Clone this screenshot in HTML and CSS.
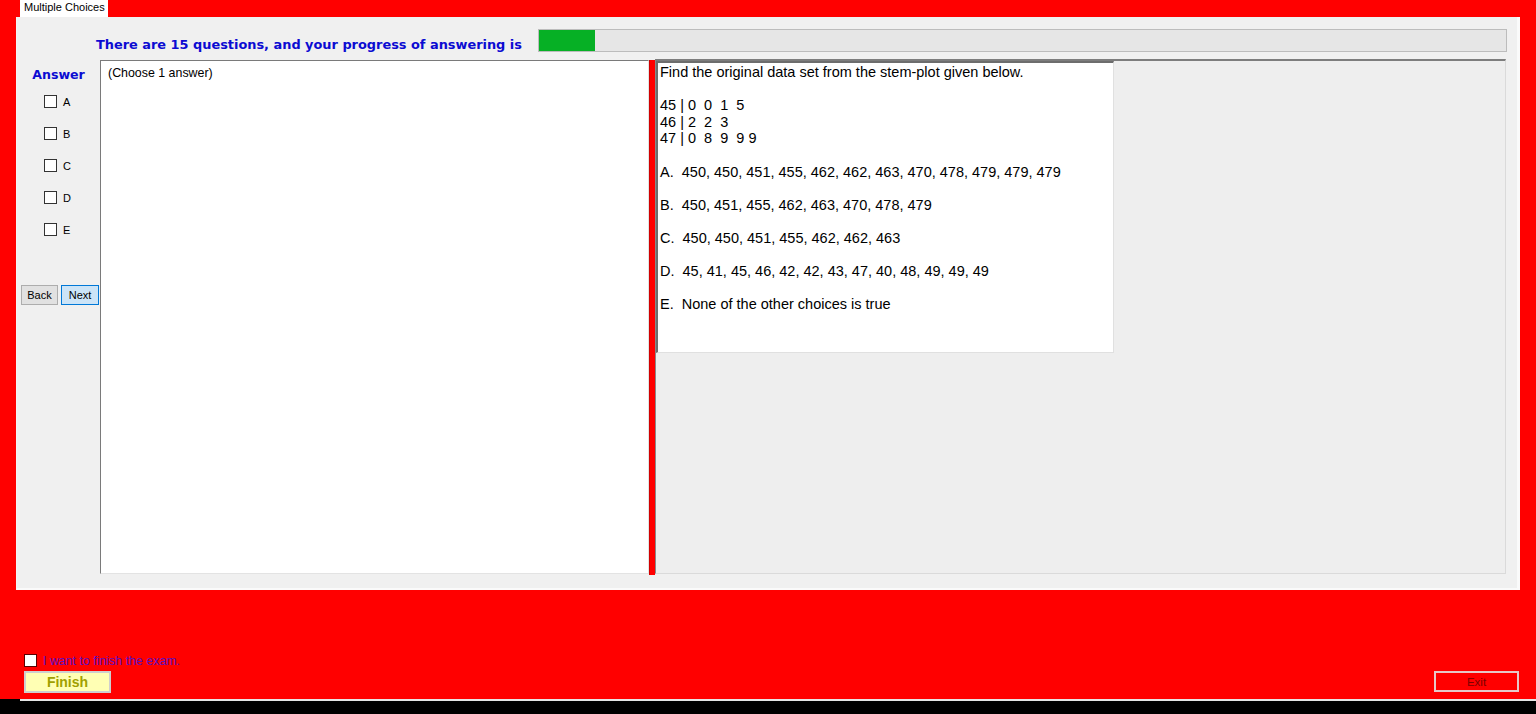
FILE: index.html
```html
<!DOCTYPE html>
<html>
<head>
<meta charset="utf-8">
<title>Multiple Choices</title>
<link rel="stylesheet" href="styles.css">
</head>
<body>
<div class="tabstrip"><div class="tab">Multiple Choices</div></div>
<div class="panel">
  <div class="header">
    <div class="progress-label">There are 15 questions, and your progress of answering is</div>
    <div class="progress"><div class="progress-fill" style="width:56px"></div></div>
  </div>
  <div class="main">
    <div class="side">
      <div class="answer-title">Answer</div>
      <ul class="choices">
        <li><span class="box"></span>A</li>
        <li><span class="box"></span>B</li>
        <li><span class="box"></span>C</li>
        <li><span class="box"></span>D</li>
        <li><span class="box"></span>E</li>
      </ul>
      <div class="nav">
        <button class="btn">Back</button>
        <button class="btn btn-next">Next</button>
      </div>
    </div>
    <div class="answer-box">(Choose 1 answer)</div>
    <div class="splitter"></div>
    <div class="question-area">
      <div class="question">
        <div class="line">Find the original data set from the stem-plot given below.</div>
        <div class="line">&nbsp;</div>
        <div class="line">45 | 0&nbsp; 0&nbsp; 1&nbsp; 5</div>
        <div class="line">46 | 2&nbsp; 2&nbsp; 3</div>
        <div class="line">47 | 0&nbsp; 8&nbsp; 9&nbsp; 9 9</div>
        <div class="line">&nbsp;</div>
        <div class="line">A.&nbsp; 450, 450, 451, 455, 462, 462, 463, 470, 478, 479, 479, 479</div>
        <div class="line">&nbsp;</div>
        <div class="line">B.&nbsp; 450, 451, 455, 462, 463, 470, 478, 479</div>
        <div class="line">&nbsp;</div>
        <div class="line">C.&nbsp; 450, 450, 451, 455, 462, 462, 463</div>
        <div class="line">&nbsp;</div>
        <div class="line">D.&nbsp; 45, 41, 45, 46, 42, 42, 43, 47, 40, 48, 49, 49, 49</div>
        <div class="line">&nbsp;</div>
        <div class="line">E.&nbsp; None of the other choices is true</div>
      </div>
    </div>
  </div>
</div>
<div class="footer">
  <div class="footer-left">
    <label class="finish-check"><span class="cbox"></span>I want to finish the exam.</label>
    <button class="finish">Finish</button>
  </div>
  <button class="exit">Exit</button>
</div>
<div class="taskbar"><div class="taskbar-line"></div></div>
</body>
</html>
```
FILE: styles.css
```css
html, body {
  margin: 0;
  padding: 0;
}
body {
  background: #ff0000;
  width: 1536px;
  height: 714px;
  overflow: hidden;
  font-family: "Liberation Sans", Arial, sans-serif;
  color: #000;
}
.tabstrip {
  height: 17px;
  padding-left: 20px;
  display: flex;
}
.tab {
  width: 88px;
  height: 17px;
  background: #ffffff;
  font-size: 11px;
  line-height: 15px;
  padding-left: 4px;
  box-sizing: border-box;
  white-space: nowrap;
}
.panel {
  margin-left: 16px;
  width: 1504px;
  height: 573px;
  box-sizing: border-box;
  background: #f0f0f0;
  border-right: 3px solid #fafafa;
  border-bottom: 2px solid #fafafa;
  border-left: 1px solid #f4f4f4;
  padding-top: 12px;
}
.header {
  display: flex;
  height: 23px;
  align-items: center;
}
.progress-label {
  margin-left: 79px;
  width: 442px;
  color: #0b0bd2;
  font-family: "DejaVu Sans", Verdana, sans-serif;
  font-weight: bold;
  font-size: 12.9px;
  padding-top: 7px;
  white-space: nowrap;
}
.progress {
  width: 969px;
  height: 23px;
  box-sizing: border-box;
  border: 1px solid #bcbcbc;
  background: #e6e6e6;
}
.progress-fill {
  height: 100%;
  background: #06b025;
}
.main {
  display: flex;
  margin-top: 7px;
  height: 516px;
}
.side {
  width: 83px;
  flex: none;
}
.answer-title {
  margin-top: 8px;
  height: 16px;
  line-height: 16px;
  text-align: center;
  font-family: "DejaVu Sans", Verdana, sans-serif;
  font-weight: bold;
  font-size: 12.6px;
  color: #0b0bd2;
  padding-left: 0;
}
.choices {
  list-style: none;
  margin: 3px 0 0 0;
  padding: 0 0 0 27px;
}
.choices li {
  height: 32px;
  display: flex;
  align-items: center;
  font-size: 11px;
}
.box {
  width: 13px;
  height: 13px;
  box-sizing: border-box;
  border: 1px solid #333333;
  background: #ffffff;
  margin-right: 6px;
  margin-top: -1px;
}
.nav {
  display: flex;
  gap: 3px;
  margin-top: 39px;
  padding-left: 4px;
}
.btn {
  width: 37px;
  height: 20px;
  box-sizing: border-box;
  border: 1px solid #adadad;
  background: #e1e1e1;
  font-family: "Liberation Sans", Arial, sans-serif;
  font-size: 11px;
  padding: 0;
  color: #000;
}
.btn-next {
  width: 38px;
  background: #cce4f7;
  border-color: #0078d7;
}
.answer-box {
  width: 549px;
  flex: none;
  margin-top: 1px;
  height: 514px;
  box-sizing: border-box;
  background: #ffffff;
  border-top: 1px solid #7a7a7a;
  border-left: 1px solid #7a7a7a;
  border-right: 1px solid #e3e3e3;
  border-bottom: 1px solid #e3e3e3;
  font-size: 12.4px;
  padding: 5px 0 0 7px;
}
.splitter {
  width: 5px;
  flex: none;
  margin-top: 1px;
  height: 515px;
  background: #ff0000;
  border-left: 1px solid #d00000;
}
.question-area {
  width: 851px;
  flex: none;
  height: 515px;
  box-sizing: border-box;
  background: #eeeeee;
  border-top: 2px solid #7d7d7d;
  border-left: 1px solid #8a8a8a;
  border-right: 1px solid #dadada;
  border-bottom: 1px solid #dadada;
}
.question {
  width: 458px;
  height: 292px;
  box-sizing: border-box;
  background: #ffffff;
  border-top: 2px solid #6d6d6d;
  border-left: 2px solid #6d6d6d;
  border-right: 1px solid #e0e0e0;
  border-bottom: 1px solid #e0e0e0;
  padding: 1px 0 0 2px;
  font-size: 14.5px;
  line-height: 16.6px;
}
.line {
  white-space: nowrap;
  height: 16.6px;
}
.footer {
  height: 109px;
  display: flex;
  justify-content: space-between;
  align-items: flex-end;
  padding: 0 17px 6px 24px;
  box-sizing: border-box;
}
.footer-left {
  display: flex;
  flex-direction: column;
  align-items: flex-start;
}
.finish-check {
  display: flex;
  align-items: center;
  height: 16px;
  margin-bottom: 2px;
  font-size: 12.4px;
  color: #5a10c0;
}
.cbox {
  width: 13px;
  height: 13px;
  box-sizing: border-box;
  border: 1px solid #5a0000;
  background: #ffffff;
  margin-right: 6px;
  margin-top: -2px;
}
.finish {
  width: 87px;
  height: 22px;
  box-sizing: border-box;
  border: 2px solid #cfcfcf;
  background: #ffffb4;
  color: #a0a000;
  font-family: "Liberation Sans", Arial, sans-serif;
  font-weight: bold;
  font-size: 14px;
  padding: 0;
}
.exit {
  width: 85px;
  height: 21px;
  margin-bottom: 1px;
  box-sizing: border-box;
  border: 2px solid #e6c8c8;
  background: #ff0000;
  color: #7a0000;
  font-family: "Liberation Sans", Arial, sans-serif;
  font-size: 11.5px;
  padding: 0;
}
.taskbar {
  height: 15px;
  background: #000000;
}
.taskbar-line {
  margin-left: 20px;
  height: 2px;
  background: #e6e6e6;
}
```
